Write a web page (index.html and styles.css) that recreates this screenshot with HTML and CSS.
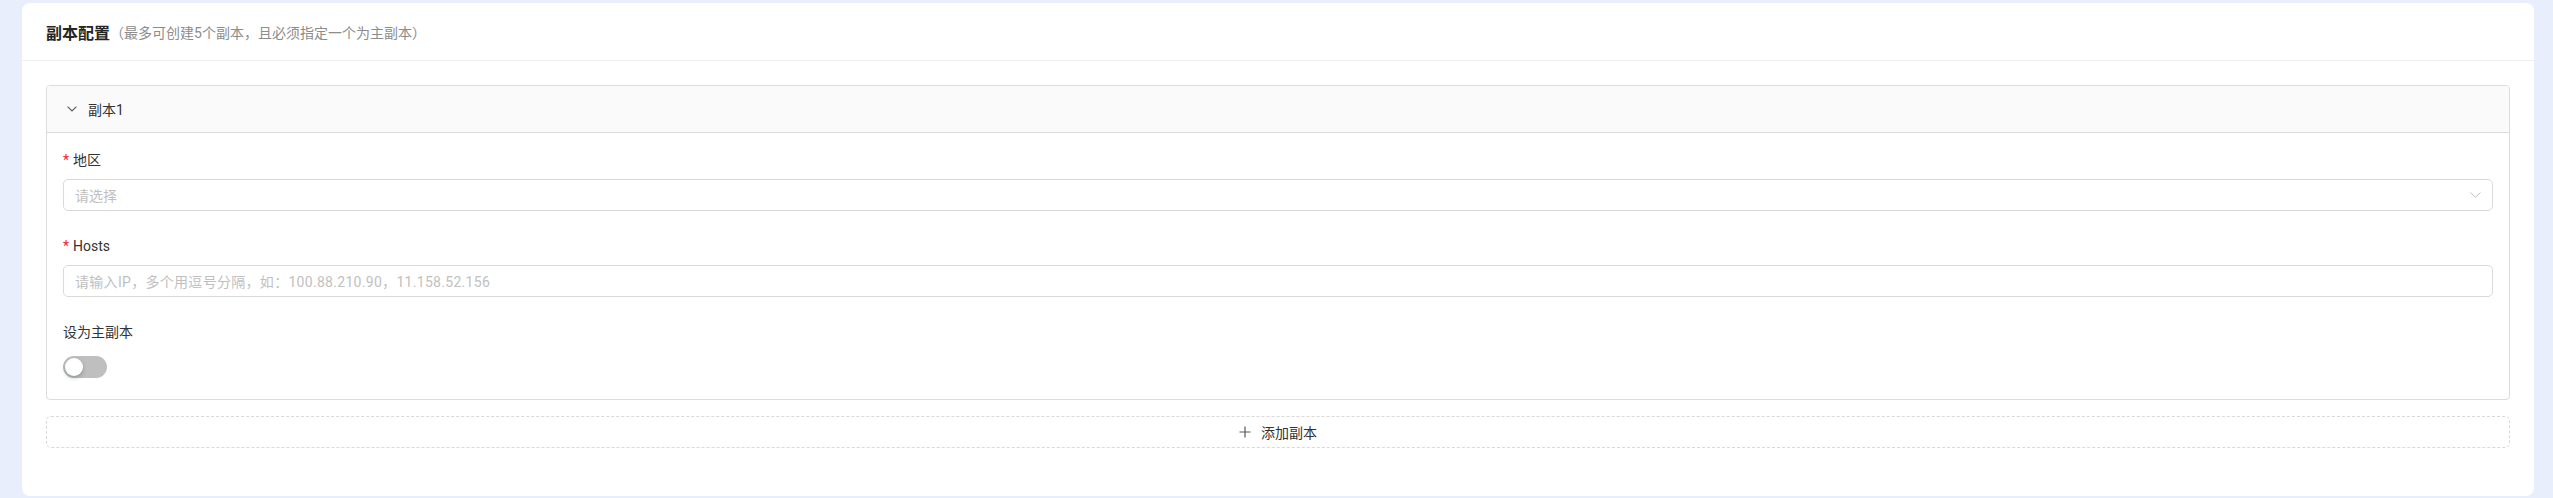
FILE: index.html
```html
<!DOCTYPE html>
<html lang="zh-CN">
<head>
<meta charset="utf-8">
<title>副本配置</title>
<link rel="stylesheet" href="styles.css">
</head>
<body>
<div class="card">
  <div class="card-header">
    <span class="card-title">副本配置</span><span class="card-sub">（最多可创建5个副本，且必须指定一个为主副本）</span>
  </div>
  <div class="card-body">
    <div class="panel">
      <div class="panel-header">
        <svg class="chev" width="10" height="6" viewBox="0 0 10 6"><path d="M0.6 0.6 L5 5 L9.4 0.6" fill="none" stroke="#595959" stroke-width="1.1"/></svg>
        <span class="panel-title">副本1</span>
      </div>
      <div class="panel-body">
        <div class="form-item">
          <div class="label"><span class="req">*</span>地区</div>
          <div class="control select">
            <span class="placeholder">请选择</span>
            <svg width="11" height="6" viewBox="0 0 11 6"><path d="M0.5 0.5 L5.5 5.3 L10.5 0.5" fill="none" stroke="#bfbfbf" stroke-width="1"/></svg>
          </div>
        </div>
        <div class="form-item">
          <div class="label"><span class="req">*</span>Hosts</div>
          <div class="control">
            <span class="placeholder wide">请输入IP，多个用逗号分隔，如：100.88.210.90，11.158.52.156</span>
          </div>
        </div>
        <div class="form-item">
          <div class="label">设为主副本</div>
          <div class="switch-wrap">
            <span class="switch"><span class="knob"></span></span>
          </div>
        </div>
      </div>
    </div>
    <div class="add-btn">
      <svg width="12" height="12" viewBox="0 0 12 12"><path d="M6 0.5 V11.5 M0.5 6 H11.5" fill="none" stroke="#595959" stroke-width="1.2"/></svg>
      <span>添加副本</span>
    </div>
  </div>
</div>
</body>
</html>
```

FILE: styles.css
```css
* { box-sizing: border-box; }
html, body { margin: 0; }
body {
  background: #e9eefc;
  padding: 3px 19px 2px 22px;
  font-family: Roboto, "Noto Sans CJK SC", sans-serif;
  font-size: 14px;
  color: #333333;
}
.card {
  background: #ffffff;
  border-radius: 8px;
}
.card-header {
  height: 58px;
  border-bottom: 1px solid #eeeeee;
  padding: 0 24px;
  display: flex;
  align-items: center;
}
.card-title {
  font-size: 16px;
  font-weight: 700;
  color: #262626;
}
.card-sub {
  font-size: 14px;
  color: #8c8c8c;
}
.card-body {
  padding: 24px 24px 48px;
}
.panel {
  border: 1px solid #dcdcdc;
  border-radius: 4px;
  overflow: hidden;
}
.panel-header {
  height: 47px;
  background: #fafafa;
  border-bottom: 1px solid #dcdcdc;
  display: flex;
  align-items: center;
  padding-left: 20px;
  gap: 11px;
}
.panel-title { color: #333333; }
.panel-body {
  padding: 16px 16px 16px;
}
.form-item + .form-item { margin-top: 24px; }
.label {
  line-height: 22px;
  height: 22px;
  margin-bottom: 8px;
  color: #333333;
}
.req {
  color: #f5222d;
  margin-right: 4px;
}
.control {
  height: 32px;
  border: 1px solid #d9d9d9;
  border-radius: 5px;
  padding: 0 11px;
  display: flex;
  align-items: center;
  justify-content: space-between;
}
.placeholder { color: #bfbfbf; }
.placeholder.wide { letter-spacing: 0.3px; }
.switch-wrap {
  height: 32px;
  display: flex;
  align-items: center;
}
.switch {
  width: 44px;
  height: 22px;
  border-radius: 11px;
  background: #bfbfbf;
  position: relative;
}
.knob {
  position: absolute;
  left: 2px;
  top: 2px;
  width: 18px;
  height: 18px;
  border-radius: 50%;
  background: #ffffff;
  box-shadow: 0 2px 4px rgba(0, 35, 11, 0.25);
}
.add-btn {
  margin-top: 16px;
  height: 32px;
  border: 1px dashed #d9d9d9;
  border-radius: 5px;
  display: flex;
  align-items: center;
  justify-content: center;
  gap: 10px;
  color: #333333;
}
```
